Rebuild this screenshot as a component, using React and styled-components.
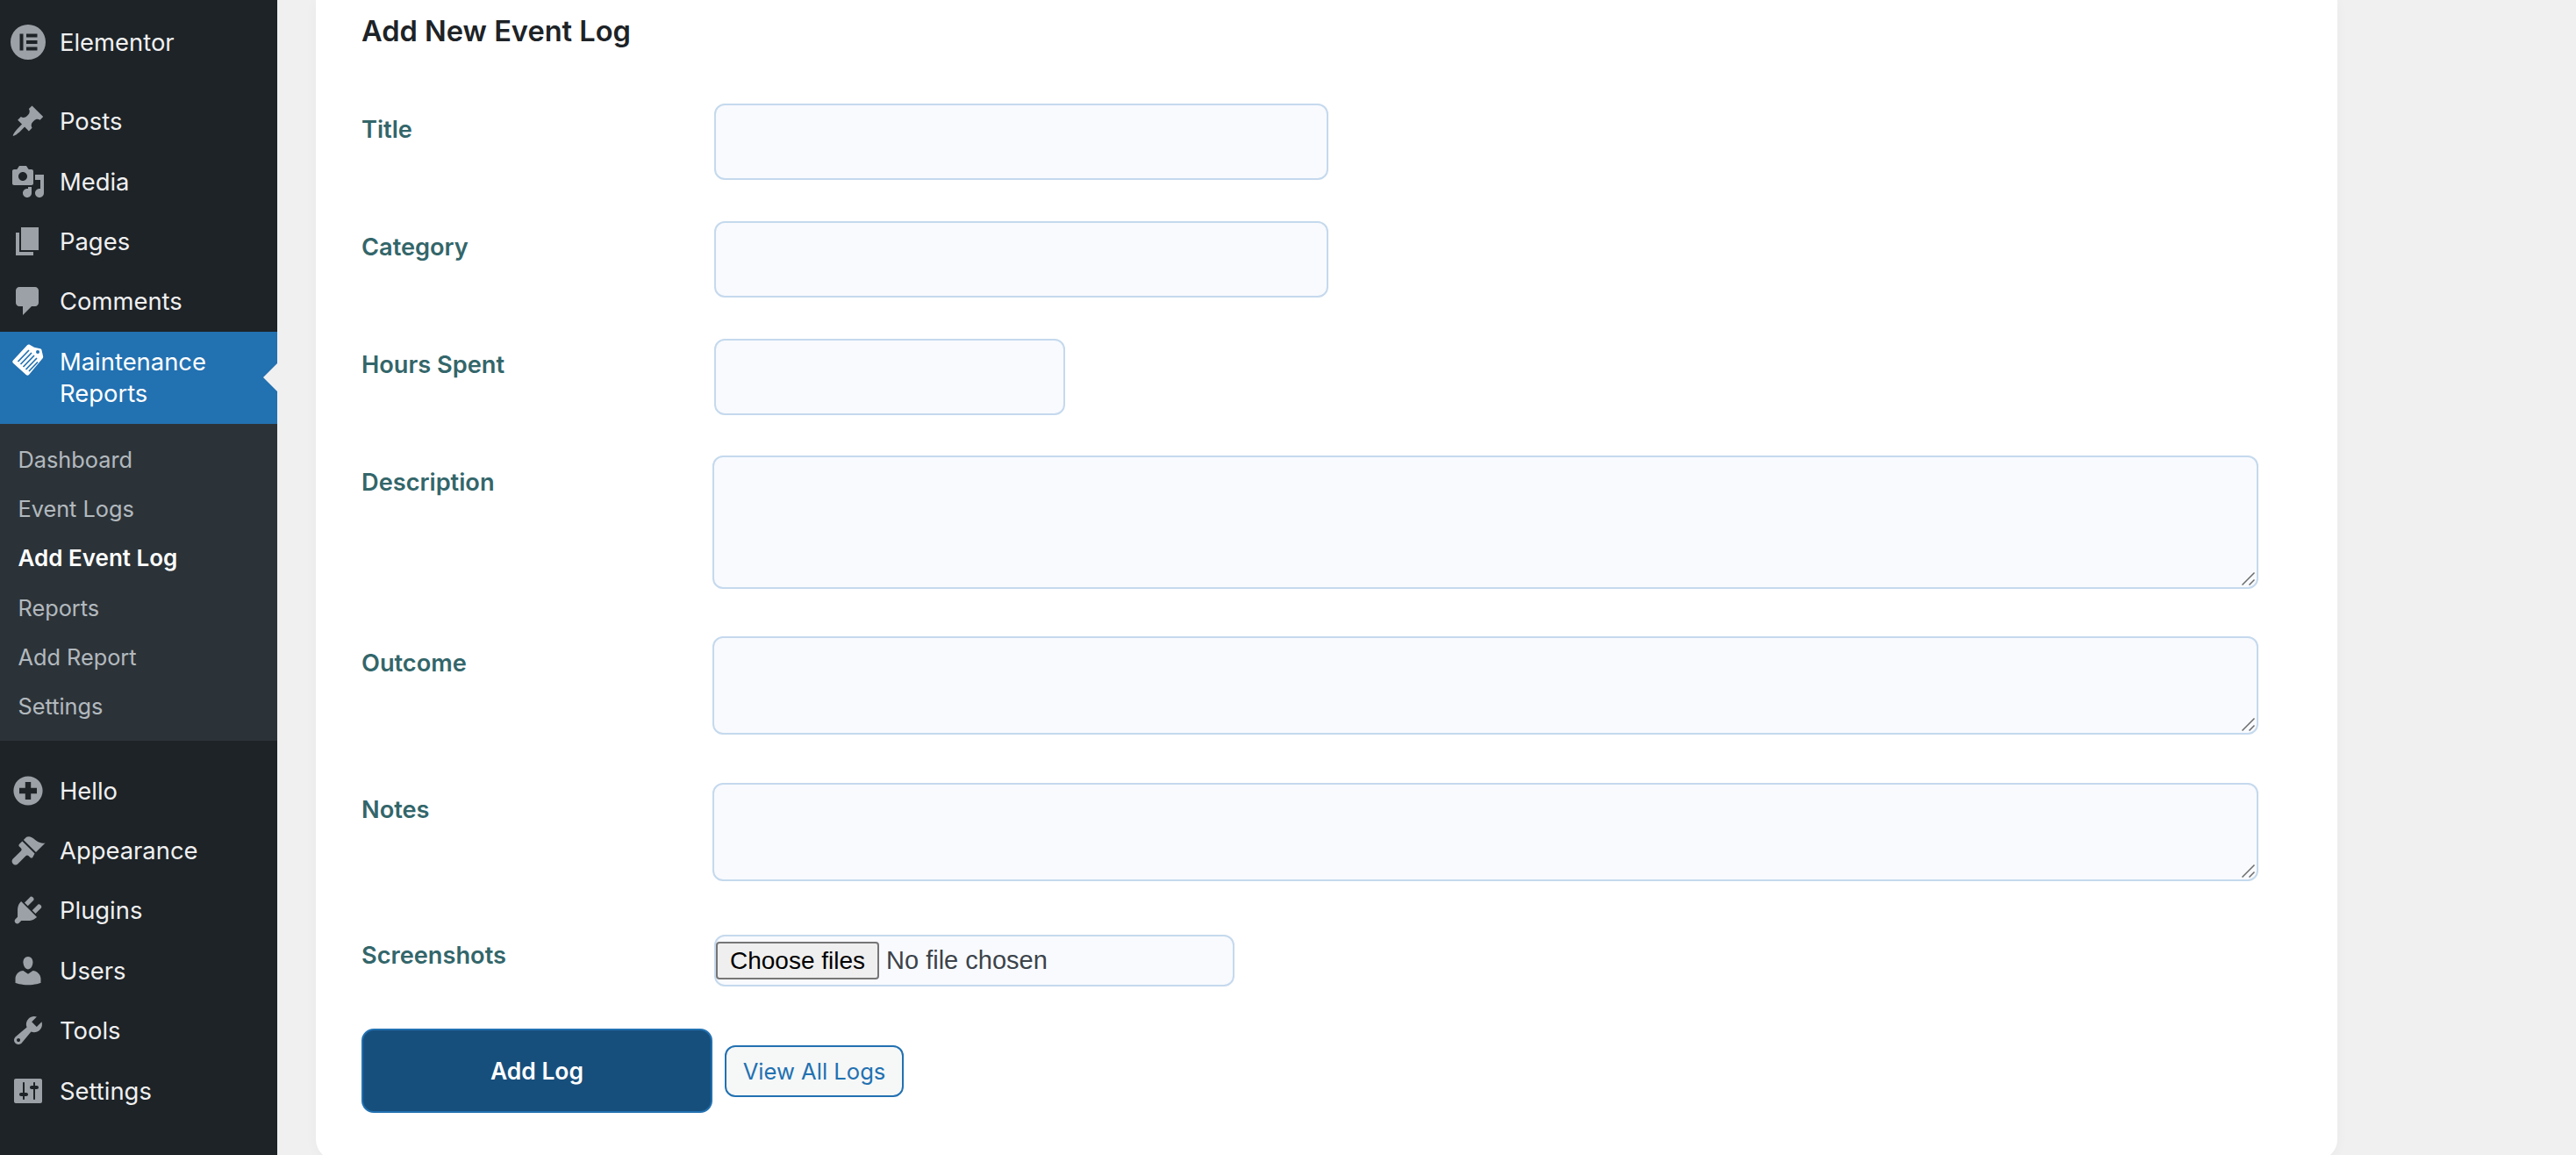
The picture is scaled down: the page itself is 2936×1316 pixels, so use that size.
import React from 'react';
import styled, { createGlobalStyle } from 'styled-components';

const GlobalSt = createGlobalStyle`
  html, body {
    margin: 0;
    height: 1316px;
    overflow: hidden;
    background: #f0f0f1;
    font-family: Inter, "Liberation Sans", sans-serif;
  }
`;

const PageSt = styled.div`
  display: flex;
  height: 1316px;
  overflow: hidden;
`;

const SidebarSt = styled.nav`
  flex: 0 0 316px;
  height: 1316px;
  padding-top: 13.6px;
  box-sizing: border-box;
  background: #1d2327;
`;

const MenuSt = styled.ul`
  list-style: none;
  margin: 0 0 ${(props) => props.$gap || 0}px;
  padding: 0;
`;

const ItemSt = styled.li`
  position: relative;
  display: flex;
  align-items: center;
  height: 68.4px;
  font-size: 27.4px;
  color: #f0f0f1;
`;

const IconSlotSt = styled.span`
  flex: 0 0 68px;
  display: flex;
  justify-content: center;
  padding-right: 4px;
  box-sizing: border-box;
  color: #9ca1a7;
  svg {
    display: block;
    fill: currentColor;
  }
`;

const ActiveItemSt = styled.li`
  position: relative;
  display: flex;
  align-items: flex-start;
  box-sizing: border-box;
  height: 105px;
  padding-top: 16px;
  background: #2271b1;
  color: #fff;
  font-size: 27.4px;
  line-height: 36.5px;
  &::after {
    content: '';
    position: absolute;
    right: 0;
    top: 36px;
    border: 16px solid transparent;
    border-left: 0;
    border-right-color: #f0f0f1;
  }
`;

const TagSlotSt = styled.span`
  flex: 0 0 68px;
  display: flex;
  padding-left: 14px;
  margin-top: -2px;
  box-sizing: border-box;
  svg {
    display: block;
  }
`;

const SubMenuSt = styled.ul`
  list-style: none;
  margin: 0 0 22px;
  padding: 12.8px 0 12px;
  background: #2c3338;
`;

const SubItemSt = styled.li`
  display: flex;
  align-items: center;
  height: 56.2px;
  padding-left: 20.5px;
  font-size: ${(props) => (props.$current ? 26 : 25.3)}px;
  font-weight: ${(props) => (props.$current ? 600 : 400)};
  color: ${(props) => (props.$current ? '#fff' : 'rgba(240, 246, 252, 0.7)')};
`;

const CardSt = styled.main`
  flex: 0 0 2304px;
  box-sizing: border-box;
  height: 1322px;
  margin-left: 44px;
  padding: 17px 52px 0;
  background: #fff;
  border-radius: 0 0 24px 24px;
  box-shadow: 0 2px 16px rgba(0, 0, 0, 0.03);
`;

const HeadingSt = styled.h2`
  margin: 0 0 64px;
  font-size: 32.6px;
  line-height: 37px;
  font-weight: 600;
  color: #1d2327;
`;

const RowSt = styled.div`
  display: flex;
  align-items: flex-start;
  margin-bottom: ${(props) => props.$gap}px;
`;

const LabelSt = styled.label`
  flex: 0 0 400px;
  padding-top: ${(props) => props.$top}px;
  font-size: 27.2px;
  line-height: 34px;
  font-weight: 600;
  color: #33666a;
`;

const fieldLook = `
  box-sizing: border-box;
  display: block;
  background: #f8fafe;
  border: 2px solid #c5d9ed;
  border-radius: 12px;
  outline: none;
`;

const InputSt = styled.input`
  ${fieldLook}
  width: ${(props) => props.$width}px;
  height: 87px;
  margin-left: 2px;
`;

const AreaWrapSt = styled.div`
  position: relative;
  width: 1762px;
  height: ${(props) => props.$height}px;
`;

const TextareaSt = styled.textarea`
  ${fieldLook}
  width: 100%;
  height: 100%;
  margin: 0;
  resize: none;
`;

const GripSt = styled.svg`
  position: absolute;
  right: 4px;
  bottom: 4px;
  stroke: #6b6b6b;
  stroke-width: 1.5;
  pointer-events: none;
`;

const FileFieldSt = styled.label`
  ${fieldLook}
  display: flex;
  align-items: center;
  width: 593px;
  height: 59px;
  margin-left: 2px;
  font-family: "Liberation Sans", Arial, sans-serif;
  font-size: 29px;
  color: #3c434a;
  input {
    display: none;
  }
`;

const ChooseSt = styled.span`
  box-sizing: border-box;
  display: flex;
  align-items: center;
  justify-content: center;
  width: 186px;
  height: 43px;
  margin-right: 8px;
  font-size: 28px;
  color: #000;
  background: #efefef;
  border: 2px solid #767676;
  border-radius: 4px;
`;

const ActionsSt = styled.div`
  display: flex;
  align-items: center;
  gap: 14px;
`;

const SubmitSt = styled.button`
  box-sizing: border-box;
  width: 400px;
  height: 96px;
  padding: 0;
  font-family: inherit;
  font-size: 26.4px;
  font-weight: 600;
  color: #fff;
  background: #174f7c;
  border: 2px solid #2271b1;
  border-radius: 14px;
`;

const LinkButtonSt = styled.a`
  box-sizing: border-box;
  display: flex;
  align-items: center;
  justify-content: center;
  width: 204px;
  height: 59px;
  font-size: 25.6px;
  color: #2271b1;
  background: #f6f7f7;
  border: 2px solid #2271b1;
  border-radius: 12px;
`;

const Dashicon = ({ d, size = 40 }) => (
  <svg width={size} height={size} viewBox="0 0 20 20">
    <path fillRule="evenodd" d={d} />
  </svg>
);

const ElementorIcon = () => (
  <svg width="40" height="40" viewBox="0 0 40 40">
    <path
      fillRule="evenodd"
      d="M20 0a20 20 0 100 40 20 20 0 000-40zM10.5 10.5h4v19h-4zM18 10.5h12.5v4H18zM18 18h12.5v4H18zM18 25.5h12.5v4H18z"
    />
  </svg>
);

const TagIcon = () => (
  <svg width="40" height="40" viewBox="0 0 40 40">
    <path
      fill="#fff"
      d="M17 1.3c1-.9 2-1 3.2-.3l4.8 2.7 6.8 1.5c.9.2 1.5.8 1.7 1.7l1.6 7c.2 1 0 1.7-.7 2.500L19 35c-1 1-2.300 1-3.300 0L1 21.800c-1-1-1-2.300 0-3.200z"
    />
    <circle cx="29" cy="9" r="2" fill="#2271b1" />
    <path
      stroke="#2271b1"
      strokeWidth="1.7"
      d="M6.500 20L19 7M9.500 23L22 10M12.500 26L25 13M15.500 29L28 16M19 31L29 20.500"
    />
  </svg>
);

const TextareaField = ({ height }) => (
  <AreaWrapSt $height={height}>
    <TextareaSt />
    <GripSt width="15" height="15" viewBox="0 0 15 15">
      <path d="M0.500 14.500L14.500 0.500M8.500 14.500L14.500 8.500" />
    </GripSt>
  </AreaWrapSt>
);

const icons = {
  posts:
    'M10.44 3.02l1.82-1.82 6.36 6.35-1.83 1.82c-1.05-.68-2.48-.57-3.41.36l-.75.75c-.92.93-1.04 2.35-.35 3.41l-1.83 1.82-2.41-2.41-2.8 2.79c-.42.42-3.38 2.71-3.8 2.29s1.86-3.39 2.28-3.81l2.79-2.79L4.1 9.36l1.83-1.82c1.05.69 2.48.57 3.4-.36l.75-.75c.93-.92 1.05-2.35.36-3.41z',
  media:
    'M13 11V4c0-.55-.45-1-1-1h-1.67L9 1H5L3.67 3H2c-.55 0-1 .45-1 1v7c0 .55.45 1 1 1h10c.55 0 1-.45 1-1zM7 4.5c1.38 0 2.5 1.12 2.5 2.5S8.38 9.5 7 9.5 4.5 8.38 4.5 7 5.62 4.5 7 4.5zM14 6h5v10.5c0 1.38-1.12 2.5-2.5 2.5S14 17.88 14 16.5s1.12-2.5 2.5-2.5c.17 0 .34.02.5.05V9h-3V6zm-4 8.05V13h2v3.5c0 1.38-1.12 2.5-2.5 2.5S7 17.88 7 16.5 8.12 14 9.5 14c.17 0 .34.02.5.05z',
  pages: 'M6 15V2h10v13H6zm-1 1h8v2H3V5h2v11z',
  comments:
    'M5 2h9c1.1 0 2 .9 2 2v7c0 1.1-.9 2-2 2h-2l-5 5v-5H5c-1.1 0-2-.9-2-2V4c0-1.1.9-2 2-2z',
  hello:
    'M10 1.7a8.300 8.300 0 100 16.600 8.300 8.300 0 000-16.600zM8.400 5h3.200v3.400H15v3.200h-3.400V15H8.400v-3.400H5V8.400h3.400z',
  appearance:
    'M14.48 11.06L7.41 3.99l1.5-1.5c.5-.56 2.3-.47 3.51.32 1.21.8 1.43 1.28 2.91 2.1 1.18.64 2.45 1.26 4.45.85zM13.77 11.77L6.7 4.7 5 6.4c-.4.4-.4 1 0 1.4l1 1c.4.4.4 1 0 1.4l-4.6 4.6c-.8.8-.8 2 0 2.8s2 .8 2.8 0l4.6-4.6c.4-.4 1-.4 1.4 0l1 1c.4.4 1 .4 1.4 0z',
  plugins:
    'M13.11 4.36L9.87 7.6 8 5.73l3.24-3.24c.35-.34 1.05-.2 1.56.32.52.51.66 1.21.31 1.55zm-8 1.77l.91-1.12 9.01 9.01-1.19.84c-.71.71-2.63 1.16-3.82 1.16H6.14L4.9 17.26c-.59.59-1.54.59-2.12 0-.59-.58-.59-1.53 0-2.12l1.24-1.24v-3.88c0-1.13.4-3.19 1.09-3.89zm7.26 3.97l3.24-3.24c.34-.35 1.04-.21 1.55.31.52.51.66 1.21.31 1.55l-3.24 3.25z',
  users:
    'M10 9.25c-2.27 0-2.73-3.44-2.73-3.44C7 4.02 7.82 2 9.97 2c2.16 0 2.98 2.02 2.71 3.81 0 0-.41 3.44-2.68 3.44zm0 2.57L12.72 10c2.39 0 4.52 2.33 4.52 4.53v2.49s-3.65 1.13-7.24 1.13c-3.65 0-7.24-1.13-7.24-1.13v-2.49c0-2.25 1.94-4.48 4.47-4.48z',
  tools:
    'M16.68 9.77c-1.34 1.34-3.3 1.67-4.95.99l-5.41 6.52c-.99.99-2.59.99-3.58 0s-.99-2.59 0-3.57l6.52-5.42c-.68-1.65-.35-3.61.99-4.95 1.28-1.28 3.12-1.62 4.72-1.06l-2.89 2.89 2.82 2.82 2.86-2.87c.53 1.58.18 3.39-1.08 4.65zM3.81 16.21c.4.39 1.04.39 1.43 0 .4-.4.4-1.04 0-1.43-.39-.4-1.03-.4-1.43 0-.39.39-.39 1.03 0 1.43z',
  settings:
    'M18 16V4c0-.55-.45-1-1-1H3c-.55 0-1 .45-1 1v12c0 .55.45 1 1 1h14c.55 0 1-.45 1-1zM8 11h1c.55 0 1 .45 1 1s-.45 1-1 1H8v1.5c0 .28-.22.5-.5.5s-.5-.22-.5-.5V13H6c-.55 0-1-.45-1-1s.45-1 1-1h1V5.5c0-.28.22-.5.5-.5s.5.22.5.5V11zm5-2h-1c-.55 0-1-.45-1-1s.45-1 1-1h1V5.5c0-.28.22-.5.5-.5s.5.22.5.5V7h1c.55 0 1 .45 1 1s-.45 1-1 1h-1v5.5c0 .28-.22.5-.5.5s-.5-.22-.5-.5V9z',
};

const topItems = [
  ['Posts', icons.posts],
  ['Media', icons.media],
  ['Pages', icons.pages],
  ['Comments', icons.comments],
];

const bottomItems = [
  ['Hello', icons.hello],
  ['Appearance', icons.appearance],
  ['Plugins', icons.plugins],
  ['Users', icons.users],
  ['Tools', icons.tools],
  ['Settings', icons.settings],
];

const subItems = ['Dashboard', 'Event Logs', 'Add Event Log', 'Reports', 'Add Report', 'Settings'];

const MenuItem = ({ label, d }) => (
  <ItemSt>
    <IconSlotSt>
      <Dashicon d={d} />
    </IconSlotSt>
    {label}
  </ItemSt>
);

const App = () => {
  return (
    <PageSt>
      <GlobalSt />
      <SidebarSt>
        <MenuSt $gap={22}>
          <ItemSt>
            <IconSlotSt>
              <ElementorIcon />
            </IconSlotSt>
            Elementor
          </ItemSt>
        </MenuSt>
        <MenuSt>
          {topItems.map(([label, d]) => (
            <MenuItem key={label} label={label} d={d} />
          ))}
          <ActiveItemSt>
            <TagSlotSt>
              <TagIcon />
            </TagSlotSt>
            <span>
              Maintenance
              <br />
              Reports
            </span>
          </ActiveItemSt>
        </MenuSt>
        <SubMenuSt>
          {subItems.map((label) => (
            <SubItemSt key={label} $current={label === 'Add Event Log'}>
              {label}
            </SubItemSt>
          ))}
        </SubMenuSt>
        <MenuSt>
          {bottomItems.map(([label, d]) => (
            <MenuItem key={label} label={label} d={d} />
          ))}
        </MenuSt>
      </SidebarSt>
      <CardSt>
        <HeadingSt>Add New Event Log</HeadingSt>
        <form>
          <RowSt $gap={47}>
            <LabelSt $top={13}>Title</LabelSt>
            <InputSt type="text" $width={700} />
          </RowSt>
          <RowSt $gap={47}>
            <LabelSt $top={13}>Category</LabelSt>
            <InputSt type="text" $width={700} />
          </RowSt>
          <RowSt $gap={46}>
            <LabelSt $top={13}>Hours Spent</LabelSt>
            <InputSt type="text" $width={400} />
          </RowSt>
          <RowSt $gap={54}>
            <LabelSt $top={14}>Description</LabelSt>
            <TextareaField height={152} />
          </RowSt>
          <RowSt $gap={55}>
            <LabelSt $top={14}>Outcome</LabelSt>
            <TextareaField height={112} />
          </RowSt>
          <RowSt $gap={61}>
            <LabelSt $top={14}>Notes</LabelSt>
            <TextareaField height={112} />
          </RowSt>
          <RowSt $gap={48}>
            <LabelSt $top={7}>Screenshots</LabelSt>
            <FileFieldSt>
              <ChooseSt>Choose files</ChooseSt>
              No file chosen
              <input type="file" multiple />
            </FileFieldSt>
          </RowSt>
          <ActionsSt>
            <SubmitSt type="button">Add Log</SubmitSt>
            <LinkButtonSt>View All Logs</LinkButtonSt>
          </ActionsSt>
        </form>
      </CardSt>
    </PageSt>
  );
};

export default App;
